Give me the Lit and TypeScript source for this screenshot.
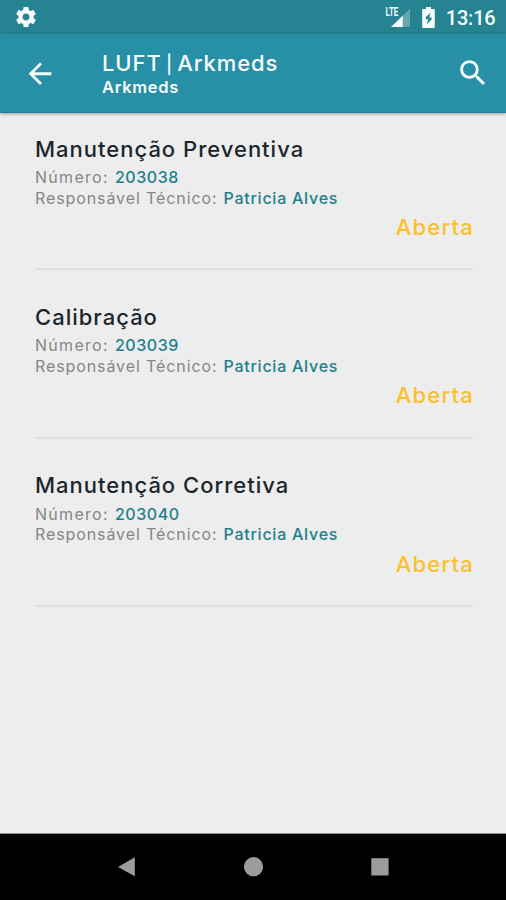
import { LitElement, html, css, svg } from "lit";
import { customElement, property } from "lit/decorators.js";

interface Order {
  title: string;
  number: string;
  owner: string;
  status: string;
}

const ORDERS: Order[] = [
  { title: "Manutenção Preventiva", number: "203038", owner: "Patricia Alves", status: "Aberta" },
  { title: "Calibração", number: "203039", owner: "Patricia Alves", status: "Aberta" },
  { title: "Manutenção Corretiva", number: "203040", owner: "Patricia Alves", status: "Aberta" },
];

@customElement("status-bar")
export class StatusBar extends LitElement {
  static styles = css`
    :host {
      display: flex;
      align-items: center;
      height: 34px;
      padding: 0 10.5px 0 14px;
      background: #268391;
      color: #f4fbfc;
      fill: currentColor;
      box-sizing: border-box;
    }
    svg { display: block; flex: none; }
    .space { flex: 1; }
    .signal { margin-right: 12px; }
    .battery { margin-right: 11px; }
    .lte { font: 700 12px "Roboto", sans-serif; }
    .time {
      font: 500 20px/34px "Roboto", sans-serif;
      letter-spacing: -0.2px;
      padding-top: 2px;
    }
  `;

  render() {
    return html`
      <svg width="24" height="34" viewBox="0 -5 24 34">
        <path d="M19.43 12.98c.04-.32.07-.64.07-.98s-.03-.66-.07-.98l2.11-1.65c.19-.15.24-.42.12-.64l-2-3.46c-.12-.22-.39-.3-.61-.22l-2.49 1c-.52-.4-1.08-.73-1.69-.98l-.38-2.65C14.46 2.18 14.25 2 14 2h-4c-.25 0-.46.18-.49.42l-.38 2.65c-.61.25-1.17.59-1.69.98l-2.49-1c-.23-.09-.49 0-.61.22l-2 3.46c-.13.22-.07.49.12.64l2.11 1.65c-.04.32-.07.65-.07.98s.03.66.07.98l-2.11 1.65c-.19.15-.24.42-.12.64l2 3.46c.12.22.39.3.61.22l2.49-1c.52.4 1.08.73 1.69.98l.38 2.65c.03.24.24.42.49.42h4c.25 0 .46-.18.49-.42l.38-2.65c.61-.25 1.17-.59 1.69-.98l2.49 1c.23.09.49 0 .61-.22l2-3.46c.12-.22.07-.49-.12-.64l-2.11-1.65zM12 15.5c-1.93 0-3.5-1.57-3.5-3.5s1.57-3.5 3.5-3.5 3.5 1.57 3.5 3.5-1.57 3.5-3.5 3.5z"/>
      </svg>
      <div class="space"></div>
      <svg class="signal" width="25" height="34" viewBox="0 0 25 34">
        <path d="M17.800 15.400 25 8.500V27h-7.200z" opacity=".3"/>
        <path d="M17.800 15.400V27H6z"/>
        <text class="lte" x="0.500" y="16.300" textLength="12.700" lengthAdjust="spacingAndGlyphs">LTE</text>
      </svg>
      <svg class="battery" width="13" height="34" viewBox="0 0 13 34">
        <path fill-rule="evenodd" d="M4 7h5v2h2.800c.6 0 1 .4 1 1v17c0 .6-.4 1-1 1H1.200c-.6 0-1-.4-1-1V10c0-.6.4-1 1-1H4zM8.500 12.800 3.800 16.900v2.300H6.200L5 24.300l4.600-4.700v-2.200H7.200z"/>
      </svg>
      <span class="time">13:16</span>
    `;
  }
}

@customElement("app-header")
export class AppHeader extends LitElement {
  @property() company = "";
  @property() product = "";

  static styles = css`
    :host {
      display: flex;
      align-items: flex-start;
      height: 79px;
      padding: 0 16px 0 23px;
      background: #278fa6;
      border-bottom: 1px solid #1d8094;
      box-shadow: 0 1px 3px rgba(0, 0, 0, 0.35);
      box-sizing: border-box;
      color: #f7fcfd;
      font-family: "Inter", "Liberation Sans", sans-serif;
      position: relative;
    }
    svg { display: block; flex: none; fill: currentColor; margin-top: 22px; }
    .titles { flex: 1; padding: 16px 0 0 45px; white-space: nowrap; }
    .heading { font-size: 22px; line-height: 27px; font-weight: 550; letter-spacing: 0.9px; word-spacing: -2.500px; }
    .bar { font-size: 18px; line-height: 1; }
    .sub { font-size: 16.500px; line-height: 20px; font-weight: 600; letter-spacing: 0.7px; }
  `;

  render() {
    return html`
      <svg width="34" height="34" viewBox="0 -0.500 24 24">
        <path d="M20 11H7.830l5.590-5.590L12 4l-8 8 8 8 1.410-1.410L7.830 13H20v-2z"/>
      </svg>
      <div class="titles">
        <div class="heading">${this.company} <span class="bar">|</span> ${this.product}</div>
        <div class="sub">${this.product}</div>
      </div>
      <svg width="34" height="34" viewBox="0 0 24 24">
        <path d="M15.500 14h-.790l-.280-.270C15.410 12.590 16 11.110 16 9.500 16 5.910 13.090 3 9.500 3S3 5.910 3 9.500 5.910 16 9.500 16c1.610 0 3.090-.590 4.230-1.570l.270.280v.790l5 4.990L20.490 19l-4.990-5zm-6 0C7.010 14 5 11.990 5 9.500S7.010 5 9.500 5 14 7.010 14 9.500 11.990 14 9.500 14z"/>
      </svg>
    `;
  }
}

@customElement("order-item")
export class OrderItem extends LitElement {
  @property({ attribute: false }) order!: Order;

  static styles = css`
    :host {
      display: flex;
      flex-direction: column;
      height: 168.300px;
      padding-top: 31.500px;
      border-bottom: 2px solid #e0e0e0;
      box-sizing: border-box;
      white-space: nowrap;
      font-family: "Inter", "Liberation Sans", sans-serif;
    }
    .title { font-size: 22px; line-height: 30px; font-weight: 500; color: #1b262d; letter-spacing: 1px; }
    .row { display: flex; gap: 6px; font-size: 16px; line-height: 20.500px; color: #868686; }
    .row.first { margin-top: 3.500px; }
    .label { letter-spacing: 0.9px; }
    .first .label { letter-spacing: 1.300px; }
    .value { color: #1e7f8c; font-weight: 500; letter-spacing: 0.750px; }
    .first .value { letter-spacing: 0.550px; }
    .status { align-self: flex-end; font-size: 22px; line-height: 30px; margin: 4px -1px 0 0; font-weight: 500; color: #fbbf2d; letter-spacing: 1.200px; }
  `;

  render() {
    const o = this.order;
    return html`
      <div class="title">${o.title}</div>
      <div class="row first"><span class="label">Número:</span><span class="value">${o.number}</span></div>
      <div class="row"><span class="label">Responsável Técnico:</span><span class="value">${o.owner}</span></div>
      <div class="status">${o.status}</div>
    `;
  }
}

@customElement("nav-bar")
export class NavBar extends LitElement {
  static styles = css`
    :host {
      display: flex;
      justify-content: center;
      gap: 106px;
      height: 67px;
      background: #000;
      border-top: 1px solid #8e8e8e;
      box-sizing: border-box;
    }
    svg { display: block; fill: #9c9c9c; }
  `;

  private icon(shape: unknown) {
    return html`<svg width="20" height="66" viewBox="0 0 20 66">${shape}</svg>`;
  }

  render() {
    return html`
      ${this.icon(svg`<path d="M1 33 17.800 23.300V42.300z"/>`)}
      ${this.icon(svg`<circle cx="10.500" cy="32.700" r="9.600"/>`)}
      ${this.icon(svg`<path d="M2.300 24.200h17.300v17.300H2.300z"/>`)}
    `;
  }
}

@customElement("app-root")
export class AppRoot extends LitElement {
  static styles = css`
    :host {
      display: flex;
      flex-direction: column;
      height: 900px;
      background: #ededed;
      overflow: hidden;
    }
    .list { flex: 1; padding: 0 33px 0 35px; margin-top: -11px; }
  `;

  render() {
    return html`
      <status-bar></status-bar>
      <app-header company="LUFT" product="Arkmeds"></app-header>
      <div class="list">${ORDERS.map((o) => html`<order-item .order=${o}></order-item>`)}</div>
      <nav-bar></nav-bar>
    `;
  }
}
